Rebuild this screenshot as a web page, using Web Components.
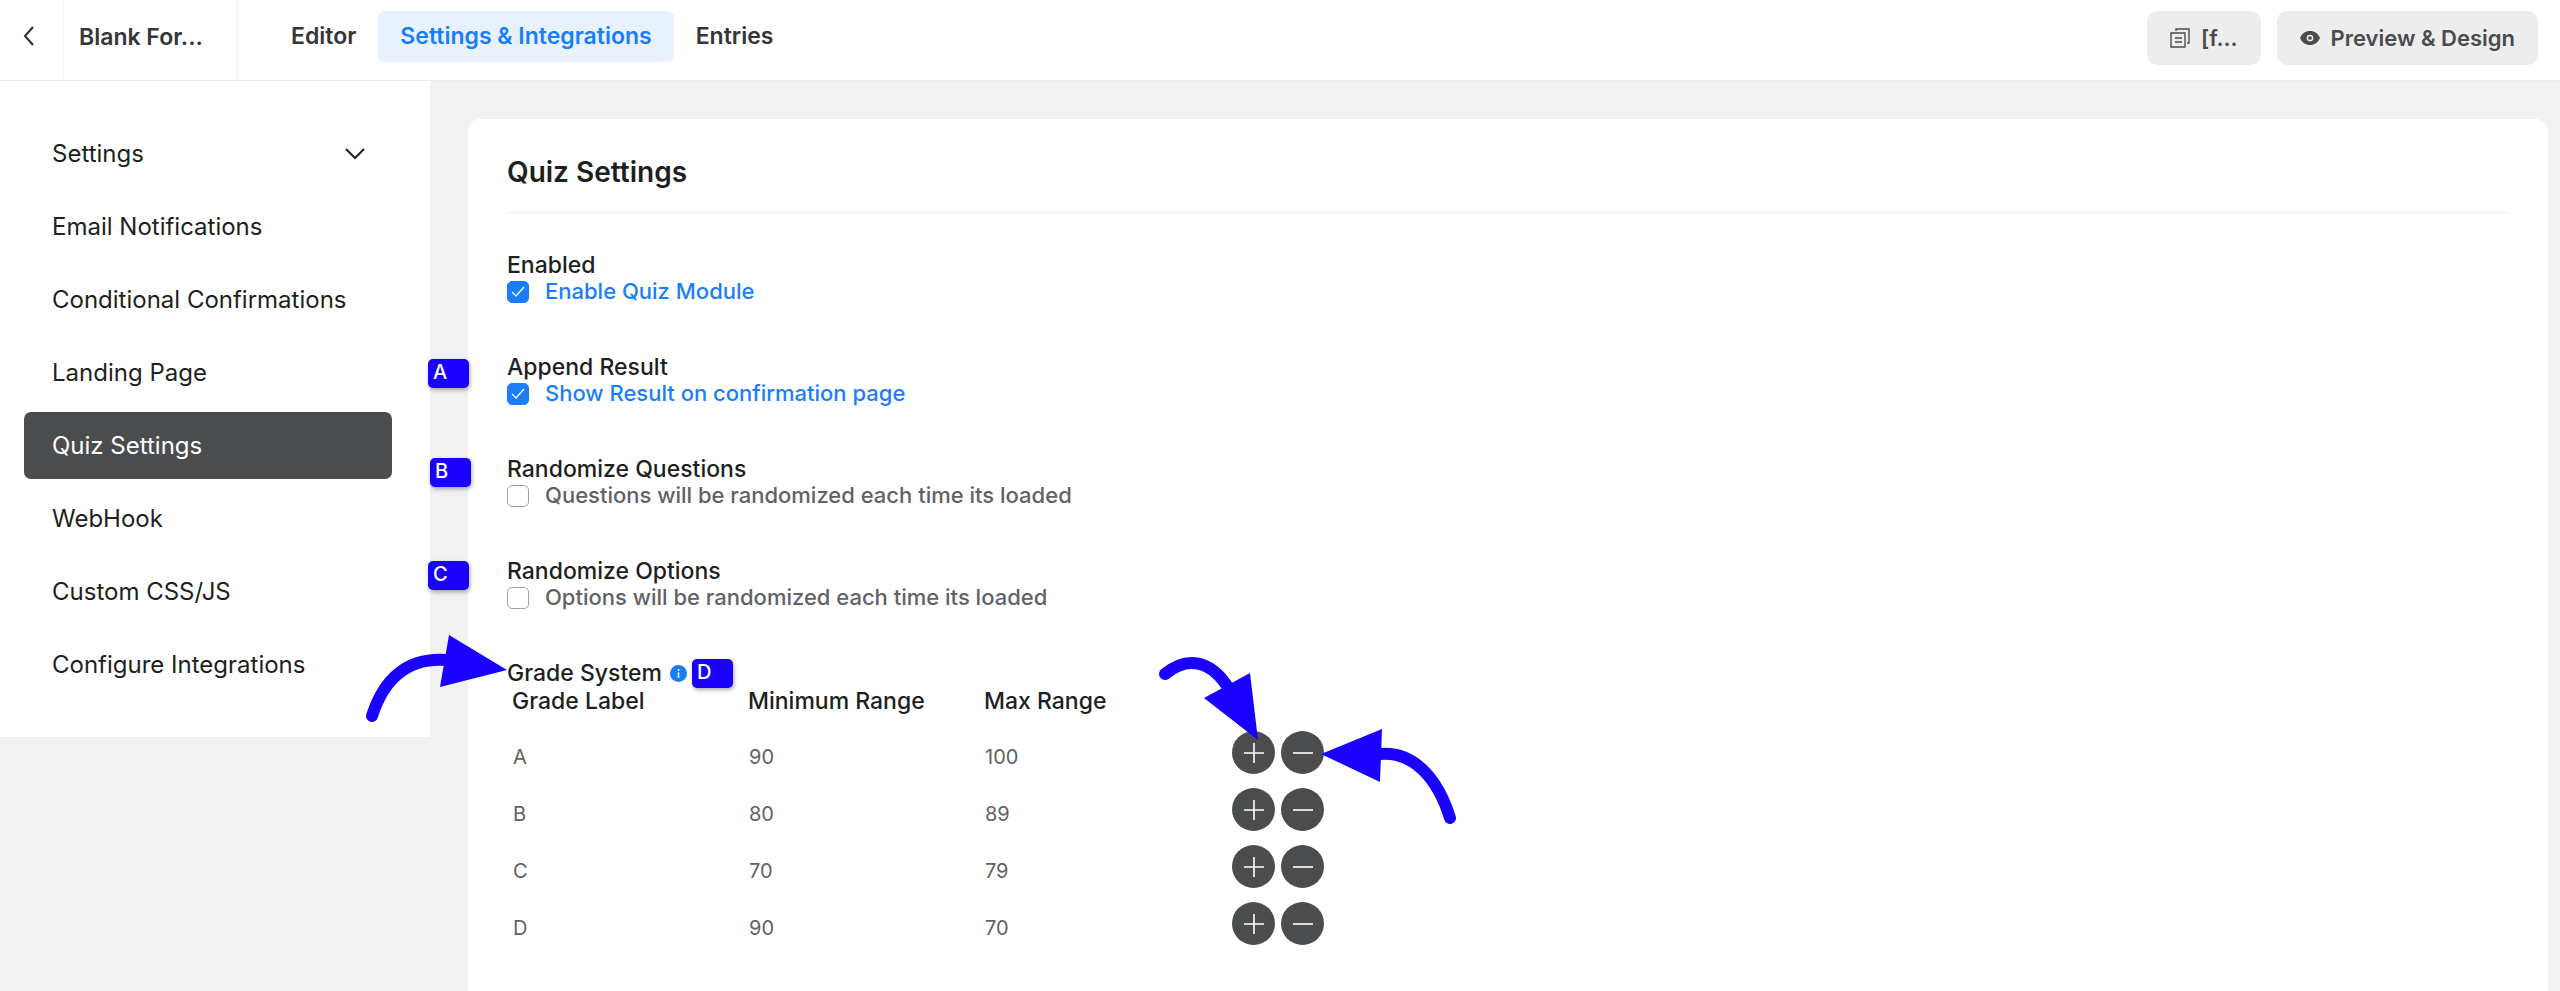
<!DOCTYPE html>
<html lang="en">
<head>
<meta charset="utf-8">
<title>Quiz Settings</title>
<style>
body {
  margin: 0;
  min-height: 100vh;
  background: #f1f1f1;
  color: #1e1f21;
  font-family: Inter, "Liberation Sans", sans-serif;
}
</style>
</head>
<body>
<form-editor></form-editor>

<script>
const define = (name, html, setup) => {
  const template = document.createElement("template");
  template.innerHTML = html;
  customElements.define(
    name,
    class extends HTMLElement {
      constructor() {
        super();
        const shadow = this.attachShadow({ mode: "open" });
        shadow.appendChild(template.content.cloneNode(true));
      }
      connectedCallback() {
        if (setup) setup(this, this.shadowRoot);
      }
    }
  );
};

define(
  "top-bar",
  `
<style>
* {
  box-sizing: border-box;
}
:host {
  display: flex;
  height: 80px;
  background: #fff;
  border-bottom: 1px solid #ececec;
  font-size: 23px;
  font-weight: 600;
}
.back {
  width: 64px;
  padding: 0 6px 6px 0;
  border: 0;
  border-right: 1px solid #efefef;
  background: none;
  color: #2b2c2e;
}
.name {
  width: 174px;
  padding: 0 15px;
  border-right: 1px solid #efefef;
  line-height: 74px;
  color: #353638;
}
nav {
  display: flex;
  align-items: flex-start;
  padding: 11px 0 0 31px;
}
a {
  padding: 0 22px;
  border-radius: 6px;
  line-height: 51px;
  color: #353638;
  text-decoration: none;
}
a.active {
  background: #e8f2ff;
  color: #1a7efb;
}
.actions {
  display: flex;
  align-items: flex-start;
  gap: 16px;
  margin-left: auto;
  padding: 11px 22px 0 0;
}
.actions button {
  display: flex;
  align-items: center;
  gap: 11px;
  height: 54px;
  padding: 0 23px;
  border: 0;
  border-radius: 10px;
  background: #ededed;
  color: #4a4b4d;
  font: inherit;
  font-size: 22px;
}
</style>
<button class="back" aria-label="Back">
  <svg width="12" height="20" viewBox="0 0 12 20" fill="none" stroke="currentColor" stroke-width="2"><path d="M10 1 2 10l8 9"/></svg>
</button>
<div class="name">Blank For...</div>
<nav>
  <a href="#editor">Editor</a>
  <a href="#settings" class="active">Settings &amp; Integrations</a>
  <a href="#entries">Entries</a>
</nav>
<div class="actions">
  <button>
    <svg width="20" height="20" viewBox="0 0 20 20" fill="none" stroke="currentColor" stroke-width="1.4"><path d="M1 5h14v14H1zM5 10h7M5 14h7M6 3V1h13v14h-2"/></svg>
    [f...
  </button>
  <button>
    <svg width="20" height="20" viewBox="0 0 20 20"><path fill="currentColor" d="M0 10C2 5.500 5.500 3 10 3s8 2.500 10 7c-2 4.500-5.500 7-10 7S2 14.500 0 10z"/><circle cx="10" cy="10" r="2.600" fill="none" stroke="#ededed" stroke-width="1.500"/></svg>
    Preview &amp; Design
  </button>
</div>
`
);

define(
  "side-menu",
  `
<style>
:host {
  display: flex;
  flex-direction: column;
  gap: 6px;
  box-sizing: border-box;
  width: 430px;
  padding: 39px 38px 39px 24px;
  background: #fff;
}
</style>
<slot></slot>
`
);

define(
  "side-item",
  `
<style>
:host {
  display: block;
}
a {
  display: flex;
  align-items: center;
  justify-content: space-between;
  height: 67px;
  padding: 0 27px 0 28px;
  border-radius: 7px;
  color: #1e1f21;
  font-size: 24px;
  text-decoration: none;
}
svg {
  display: none;
}
:host([expandable]) svg {
  display: block;
}
:host([active]) a {
  background: #4b4c4e;
  color: #fff;
}
</style>
<a href="#">
  <slot></slot>
  <svg width="20" height="12" viewBox="0 0 20 12" fill="none" stroke="currentColor" stroke-width="2"><path d="m1 1 9 9 9-9"/></svg>
</a>
`
);

define(
  "step-badge",
  `
<style>
:host {
  position: absolute;
  box-sizing: border-box;
  width: 41px;
  height: 29px;
  padding-left: 5px;
  border-radius: 5px;
  background: #1a00ff;
  box-shadow: 1px 2px 4px #0005;
  color: #fff;
  font-size: 20px;
  font-weight: 500;
  line-height: 26px;
}
</style>
<slot></slot>
`
);

define(
  "quiz-option",
  `
<style>
:host {
  display: block;
  position: relative;
  font-size: 22px;
  font-weight: 500;
  line-height: 27px;
}
.title {
  font-size: 23px;
  line-height: 26px;
}
label {
  display: flex;
  align-items: center;
  color: #606266;
}
.box {
  display: grid;
  margin-right: 16px;
}
.box > * {
  grid-area: 1 / 1;
}
input {
  appearance: none;
  box-sizing: border-box;
  width: 22px;
  height: 22px;
  margin: 0;
  border: 1px solid #a0a2a6;
  border-radius: 5px;
  background: #fff;
}
input:checked {
  border-color: #1a7efb;
  background: #1a7efb;
}
label:has(:checked) {
  color: #1a7efb;
}
svg {
  z-index: 1;
  place-self: center;
}
</style>
<div class="title"></div>
<label>
  <span class="box">
    <input type="checkbox">
    <svg width="14" height="12" viewBox="0 0 14 12" fill="none" stroke="#fff" stroke-width="1.300"><path d="m1 6 4 4 8-9"/></svg>
  </span>
  <slot></slot>
</label>
<slot name="badge"></slot>
`,
  (el, root) => {
    root.querySelector(".title").textContent = el.getAttribute("heading");
    root.querySelector("input").checked = el.hasAttribute("checked");
  }
);

define(
  "round-button",
  `
<style>
:host {
  display: block;
}
button {
  display: grid;
  place-items: center;
  width: 43px;
  height: 43px;
  padding: 0;
  border: 0;
  border-radius: 50%;
  background: #4b4c4e;
}
</style>
<button><svg width="22" height="22" viewBox="0 0 22 22" stroke="#fff" stroke-width="1.600"><path d=""/></svg></button>
`,
  (el, root) => {
    const plus = el.getAttribute("kind") === "plus";
    root.querySelector("path").setAttribute("d", plus ? "M1 11h20M11 1v20" : "M1 11h20");
    root.querySelector("button").setAttribute("aria-label", plus ? "Add grade" : "Remove grade");
  }
);

define(
  "grade-table",
  `
<style>
:host {
  display: block;
  position: relative;
  font-size: 23px;
  font-weight: 500;
}
.title {
  display: flex;
  align-items: center;
  gap: 8px;
  line-height: 26px;
}
table {
  border-collapse: collapse;
  table-layout: fixed;
  width: 820px;
}
th {
  width: 236px;
  padding: 0 0 7px 5px;
  font-weight: 500;
  line-height: 31px;
  text-align: left;
  box-sizing: border-box;
}
th:last-child {
  width: auto;
}
td {
  height: 48px;
  padding: 9px 0 0 6px;
  color: #606266;
  font-size: 20px;
  font-weight: 400;
}
td:last-child {
  padding: 0 0 0 17px;
}
.buttons {
  display: flex;
  gap: 6px;
}
.arrows {
  position: absolute;
  top: -59px;
  left: -157px;
  pointer-events: none;
}
</style>
<div class="title">
  Grade System
  <svg width="17" height="17" viewBox="0 0 17 17"><circle cx="8.500" cy="8.500" r="8.500" fill="#1a7efb"/><path stroke="#fff" stroke-width="1.500" d="M8.500 4v2M8.500 7.500V13"/></svg>
</div>
<table>
  <thead>
    <tr><th>Grade Label</th><th>Minimum Range</th><th>Max Range</th><th></th></tr>
  </thead>
  <tbody></tbody>
</table>
<slot name="badge"></slot>
<svg class="arrows" width="1150" height="260" viewBox="350 600 1150 260" fill="none" stroke="#1a00ff" stroke-width="12" stroke-linecap="round">
  <path d="M372 715C384 677 408 656 447 659"/>
  <path d="M1165 673C1188 654 1212 660 1229 688"/>
  <path d="M1450 817C1438 778 1414 750 1380 753"/>
  <path fill="#1a00ff" stroke="none" d="m449 634 58 35-67 17zM1250 672l8 67-54-42zM1382 728l-61 25 59 28z"/>
</svg>
`,
  (el, root) => {
    const rows = JSON.parse(el.getAttribute("rows"));
    root.querySelector("tbody").innerHTML = rows
      .map(
        (row) => `<tr>${row.map((cell) => `<td>${cell}</td>`).join("")}
<td><div class="buttons"><round-button kind="plus"></round-button><round-button kind="minus"></round-button></div></td></tr>`
      )
      .join("");
  }
);

define(
  "settings-card",
  `
<style>
:host {
  display: flex;
  flex-direction: column;
  gap: 49px;
  flex: 1;
  margin: 38px 12px 0 38px;
  padding: 0 39px 40px;
  border-radius: 12px 12px 0 0;
  background: #fff;
}
h1 {
  margin: 0 0 -10px;
  padding: 31px 0 18px;
  border-bottom: 1px solid #ececec;
  font-size: 28px;
  font-weight: 600;
  line-height: 44px;
}
</style>
<h1><slot name="title"></slot></h1>
<slot></slot>
`
);

define(
  "form-editor",
  `
<style>
:host {
  display: flex;
  flex-direction: column;
  min-height: 100vh;
}
main {
  display: flex;
  flex: 1;
}
side-menu {
  align-self: flex-start;
}
/* callouts hang off the left edge of the card */
.a, .c {
  top: 5px;
  left: -79px;
}
.b {
  top: 2px;
  left: -77px;
}
.c {
  top: 3px;
}
.d {
  top: -1px;
  left: 185px;
}
</style>
<top-bar></top-bar>
<main>
  <side-menu>
    <side-item expandable>Settings</side-item>
    <side-item>Email Notifications</side-item>
    <side-item>Conditional Confirmations</side-item>
    <side-item>Landing Page</side-item>
    <side-item active>Quiz Settings</side-item>
    <side-item>WebHook</side-item>
    <side-item>Custom CSS/JS</side-item>
    <side-item>Configure Integrations</side-item>
  </side-menu>
  <settings-card>
    <span slot="title">Quiz Settings</span>
    <quiz-option heading="Enabled" checked>Enable Quiz Module</quiz-option>
    <quiz-option heading="Append Result" checked>
      <step-badge slot="badge" class="a">A</step-badge>Show Result on confirmation page
    </quiz-option>
    <quiz-option heading="Randomize Questions">
      <step-badge slot="badge" class="b">B</step-badge>Questions will be randomized each time its loaded
    </quiz-option>
    <quiz-option heading="Randomize Options">
      <step-badge slot="badge" class="c">C</step-badge>Options will be randomized each time its loaded
    </quiz-option>
    <grade-table rows='[["A",90,100],["B",80,89],["C",70,79],["D",90,70]]'>
      <step-badge slot="badge" class="d">D</step-badge>
    </grade-table>
  </settings-card>
</main>
`
);
</script>
</body>
</html>
